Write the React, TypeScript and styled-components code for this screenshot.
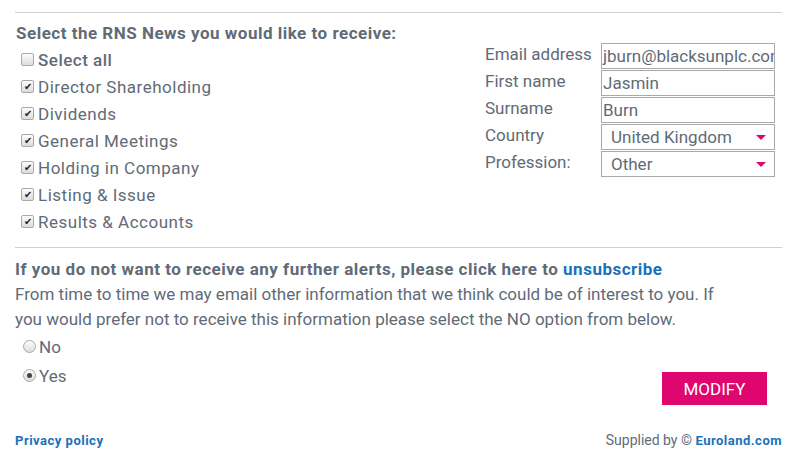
import React from "react";
import styled, {createGlobalStyle} from "styled-components";

const GlobalStyle = createGlobalStyle`
    body {
        margin: 0;
        background: #ffffff;
        font-family: Roboto, "Liberation Sans", sans-serif;
        color: #5f6b77;
    }
`;

const Page = styled.div`
    padding: 12px 18px 0 15px;
    width: 767px;
`;

const Rule = styled.div`
    height: 1px;
    background: #cfcfcf;
`;

const Top = styled.div`
    display: flex;
    justify-content: space-between;
    align-items: flex-start;
    padding: 9px 0 12px 0;
`;

const Heading = styled.div`
    font-weight: 700;
    font-size: 17px;
    letter-spacing: 0.5px;
    line-height: 22px;
    margin: 0 0 2px 1px;
`;

const CheckRow = styled.label<{bold?: boolean}>`
    display: flex;
    align-items: center;
    height: 27px;
    padding-left: 6px;
    font-size: 17px;
    letter-spacing: 0.5px;
    font-weight: ${(p) => (p.bold ? 500 : 400)};
`;

const Box = styled.span`
    width: 11px;
    height: 11px;
    border: 1px solid #a9a9a9;
    border-radius: 2px;
    background: linear-gradient(#fdfdfd, #dcdcdc);
    margin-right: 4px;
    display: flex;
    align-items: center;
    justify-content: center;
    font-size: 10px;
    line-height: 1;
    letter-spacing: 0;
    color: #222;
`;

const Form = styled.div`
    display: grid;
    grid-template-columns: 116px 174px;
    row-gap: 1px;
    padding-top: 21px;
    margin-right: 7px;
`;

const FieldLabel = styled.div`
    font-size: 17px;
    height: 26px;
    line-height: 22px;
`;

const Field = styled.div`
    border: 1px solid #a9a9a9;
    font-size: 17px;
    line-height: 24px;
    padding-left: 1px;
    overflow: hidden;
    white-space: nowrap;
    box-sizing: border-box;
    width: 174px;
    height: 26px;
`;

const Select = styled(Field)`
    display: flex;
    justify-content: space-between;
    align-items: center;
    padding: 0 8px 0 9px;
`;

const Arrow = styled.span`
    width: 0;
    height: 0;
    border-left: 5px solid transparent;
    border-right: 5px solid transparent;
    border-top: 5px solid #e0066f;
`;

const Bottom = styled.div`
    padding-top: 10px;
`;

const Strong = styled.div`
    font-weight: 700;
    font-size: 17px;
    letter-spacing: 0.5px;
    line-height: 22px;
`;

const Link = styled.a<{size?: number}>`
    color: #1a71b9;
    text-decoration: none;
    font-weight: 700;
    letter-spacing: 0.5px;
    font-size: ${(p) => p.size ?? 17}px;
`;

const Para = styled.p`
    margin: 2px 0 0 0;
    width: 715px;
    font-size: 17px;
    line-height: 25px;
`;

const RadioRow = styled.label`
    display: flex;
    align-items: center;
    height: 29px;
    padding-left: 8px;
    font-size: 17px;
`;

const Radio = styled.span<{on?: boolean}>`
    width: 11px;
    height: 11px;
    border: 1px solid #a9a9a9;
    border-radius: 50%;
    background: linear-gradient(#fdfdfd, #dcdcdc);
    margin-right: 3px;
    display: flex;
    align-items: center;
    justify-content: center;
    &::after {
        content: "";
        width: 5px;
        height: 5px;
        border-radius: 50%;
        background: ${(p) => (p.on ? "#444" : "transparent")};
    }
`;

const ActionRow = styled.div`
    display: flex;
    justify-content: space-between;
    align-items: flex-start;
`;

const Modify = styled.button`
    background: #e0066f;
    color: #ffffff;
    border: none;
    width: 105px;
    height: 33px;
    font-family: Roboto, "Liberation Sans", sans-serif;
    font-size: 17px;
    margin: 40px 15px 0 0;
`;

const Footer = styled.div`
    display: flex;
    justify-content: space-between;
    align-items: center;
    margin-top: 27px;
`;

const Supplied = styled.div`
    font-size: 14px;
    color: #5f6b77;
`;

const topics = [
    "Director Shareholding",
    "Dividends",
    "General Meetings",
    "Holding in Company",
    "Listing & Issue",
    "Results & Accounts",
];

const App: React.FC = () => {
    return (
        <Page>
            <GlobalStyle/>
            <Rule/>
            <Top>
                <div>
                    <Heading>Select the RNS News you would like to receive:</Heading>
                    <CheckRow bold><Box/>Select all</CheckRow>
                    {topics.map((t) => (
                        <CheckRow key={t}><Box>✔</Box>{t}</CheckRow>
                    ))}
                </div>
                <Form>
                    <FieldLabel>Email address</FieldLabel>
                    <Field>jburn@blacksunplc.com</Field>
                    <FieldLabel>First name</FieldLabel>
                    <Field>Jasmin</Field>
                    <FieldLabel>Surname</FieldLabel>
                    <Field>Burn</Field>
                    <FieldLabel>Country</FieldLabel>
                    <Select>United Kingdom<Arrow/></Select>
                    <FieldLabel>Profession:</FieldLabel>
                    <Select>Other<Arrow/></Select>
                </Form>
            </Top>
            <Rule/>
            <Bottom>
                <Strong>
                    If you do not want to receive any further alerts, please click here to{" "}
                    <Link href="#">unsubscribe</Link>
                </Strong>
                <Para>
                    From time to time we may email other information that we think could be of interest to you. If
                    you would prefer not to receive this information please select the NO option from below.
                </Para>
                <ActionRow>
                    <div>
                        <RadioRow><Radio/>No</RadioRow>
                        <RadioRow><Radio on/>Yes</RadioRow>
                    </div>
                    <Modify>MODIFY</Modify>
                </ActionRow>
                <Footer>
                    <Link href="#" size={13}>Privacy policy</Link>
                    <Supplied>Supplied by © <Link href="#" size={13}>Euroland.com</Link></Supplied>
                </Footer>
            </Bottom>
        </Page>
    );
};

export default App;
